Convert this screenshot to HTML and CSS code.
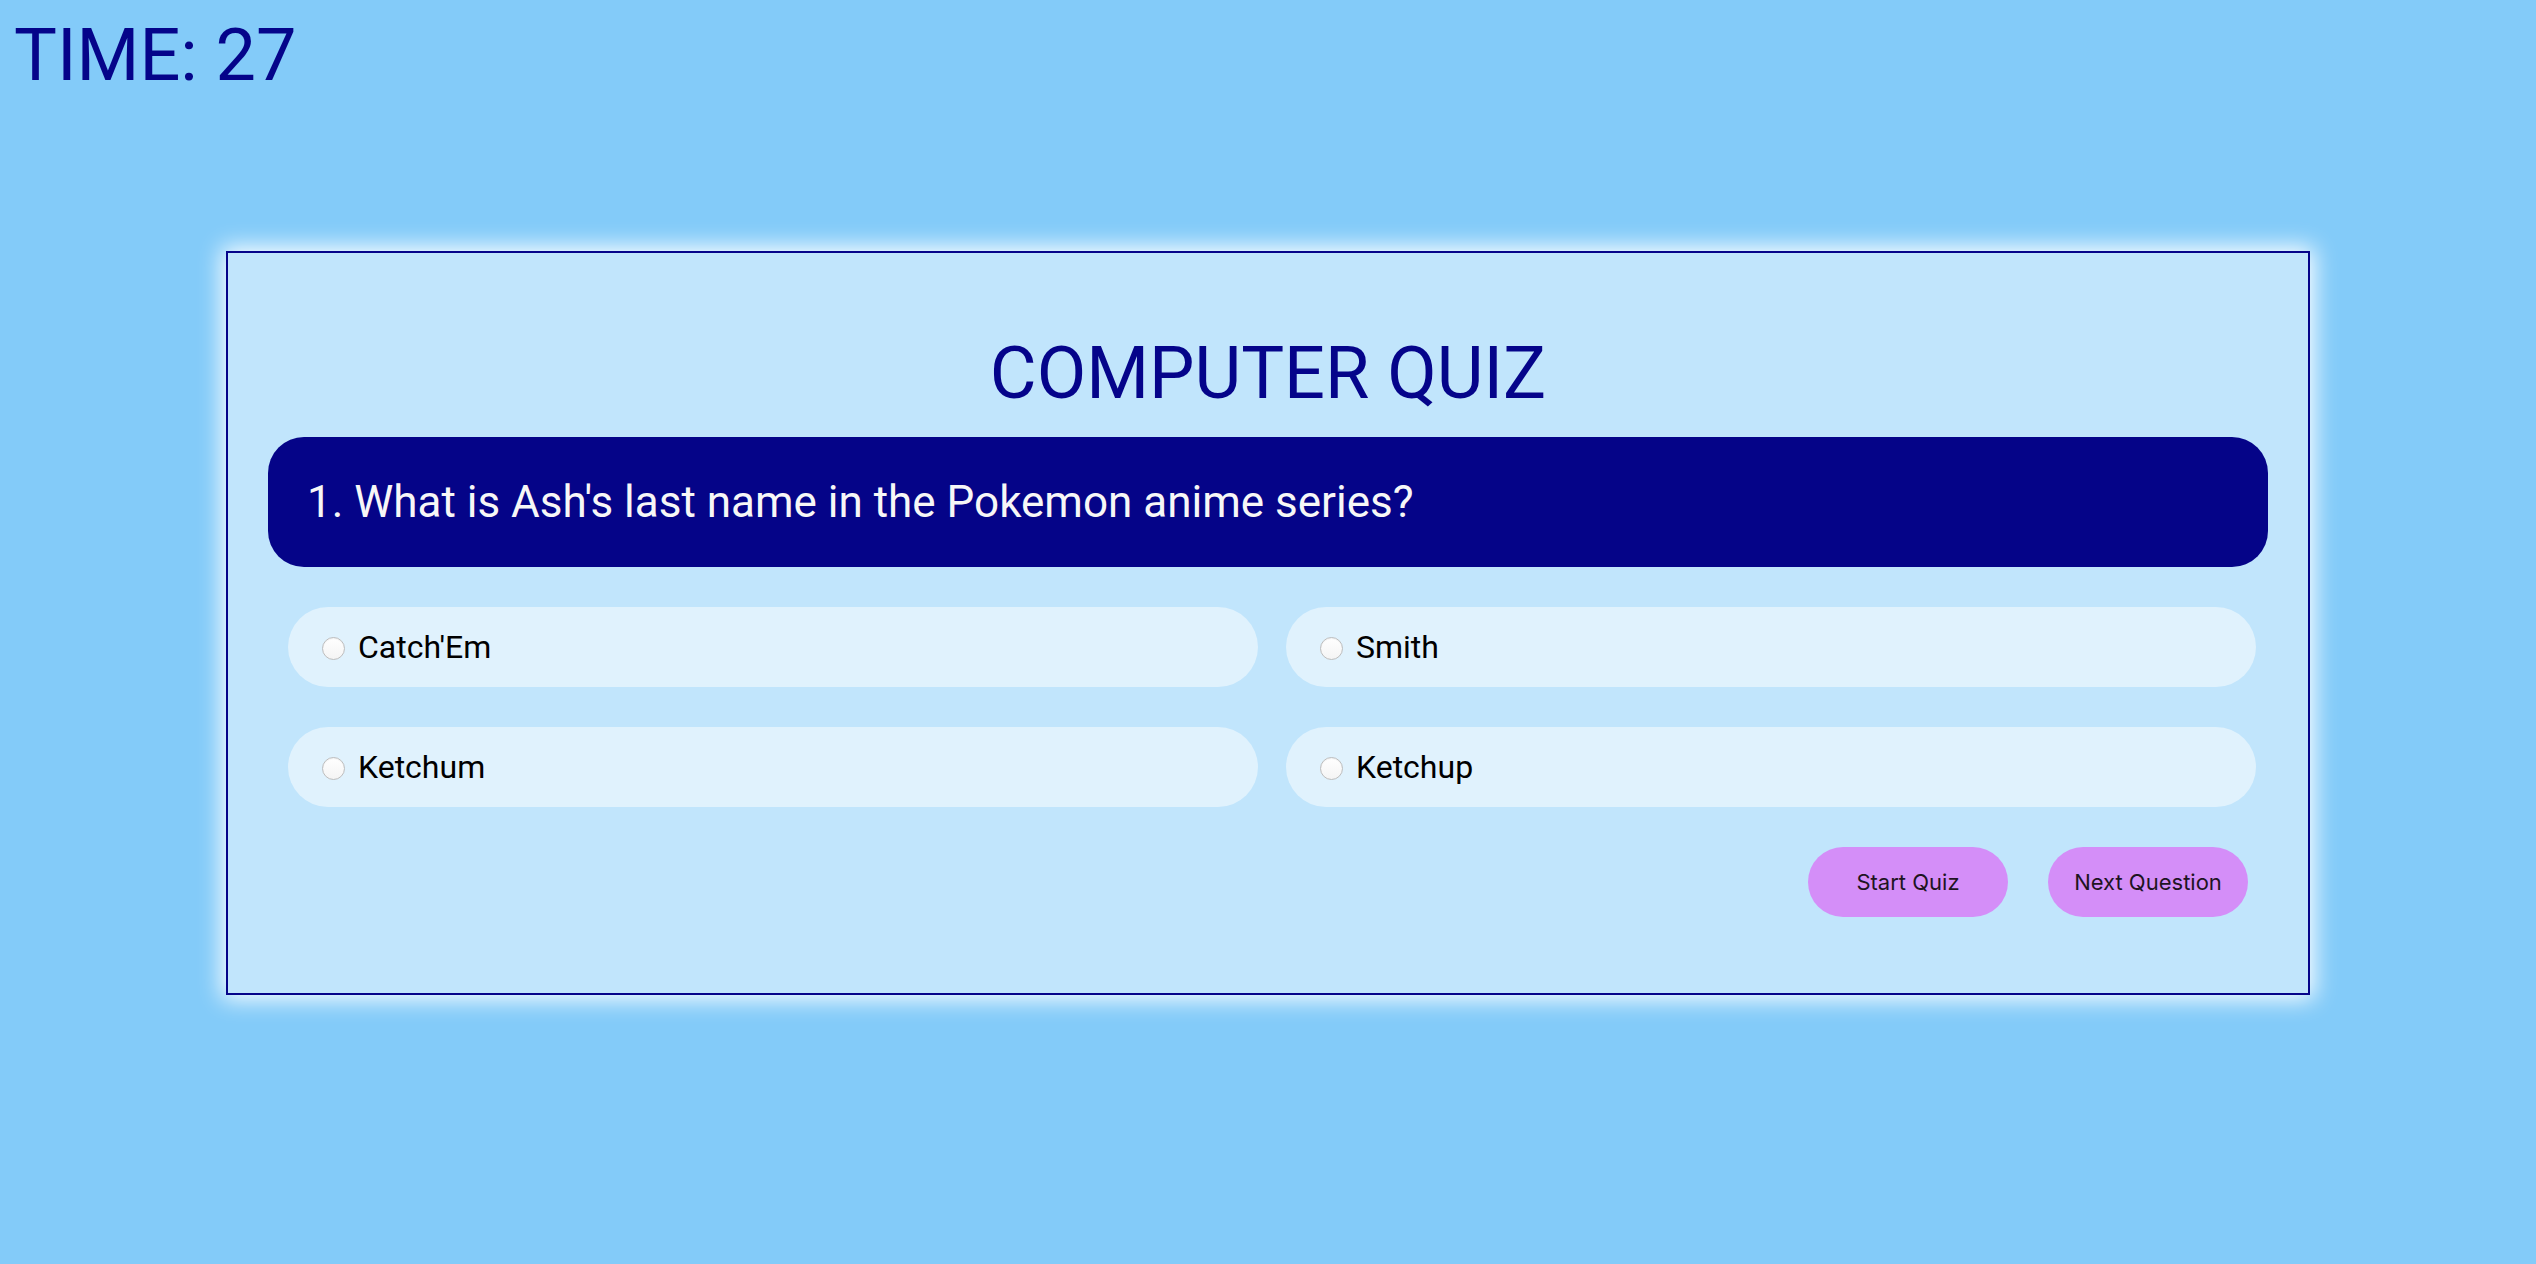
FILE: index.html
```html
<!DOCTYPE html>
<html lang="en">
<head>
<meta charset="utf-8">
<title>Computer Quiz</title>
<link rel="stylesheet" href="styles.css">
</head>
<body>
  <div class="timer">TIME: 27</div>
  <main class="card">
    <h1 class="title">COMPUTER QUIZ</h1>
    <div class="question">1. What is Ash's last name in the Pokemon anime series?</div>
    <div class="answers">
      <label class="answer"><input type="radio" name="a" class="radio"><span>Catch'Em</span></label>
      <label class="answer"><input type="radio" name="a" class="radio"><span>Smith</span></label>
      <label class="answer"><input type="radio" name="a" class="radio"><span>Ketchum</span></label>
      <label class="answer"><input type="radio" name="a" class="radio"><span>Ketchup</span></label>
    </div>
    <div class="actions">
      <button class="btn">Start Quiz</button>
      <button class="btn">Next Question</button>
    </div>
  </main>
</body>
</html>
```

FILE: styles.css
```css
html, body {
  margin: 0;
  padding: 0;
}
body {
  background: #83cbf9;
  font-family: Roboto, "Liberation Sans", sans-serif;
  min-height: 1264px;
  overflow: hidden;
}
.timer {
  color: #05048a;
  font-size: 72px;
  line-height: normal;
  padding: 13px 0 0 14px;
}
.card {
  box-sizing: border-box;
  width: 2084px;
  margin: 153px auto 0;
  background: #c1e5fc;
  border: 2px solid #05048a;
  box-shadow: 0 0 22px 4px #ffffff;
  padding: 78px 40px 76px;
}
.title {
  margin: 0;
  color: #05048a;
  font-size: 72px;
  font-weight: 400;
  line-height: normal;
  text-align: center;
}
.question {
  margin-top: 21px;
  height: 130px;
  box-sizing: border-box;
  background: #050488;
  border-radius: 36px;
  color: #f7f7f7;
  font-size: 44px;
  display: flex;
  align-items: center;
  padding-left: 39px;
}
.answers {
  display: grid;
  grid-template-columns: 1fr 1fr;
  column-gap: 28px;
  row-gap: 40px;
  margin: 40px 12px 0 20px;
}
.answer {
  height: 80px;
  border-radius: 40px;
  background: #e0f2fd;
  display: flex;
  align-items: center;
  padding-left: 34px;
  font-size: 32px;
  color: #000;
}
.radio {
  appearance: none;
  -webkit-appearance: none;
  margin: 2px 13px 0 0;
  width: 23px;
  height: 23px;
  border-radius: 50%;
  border: 1px solid #bdbdbd;
  background: linear-gradient(#ffffff, #f4f4f4);
  box-sizing: border-box;
  box-shadow: inset 0 1px 1px rgba(0,0,0,0.05);
}
.actions {
  display: flex;
  justify-content: flex-end;
  gap: 40px;
  margin: 40px 20px 0 0;
}
.btn {
  width: 200px;
  height: 70px;
  border: none;
  border-radius: 35px;
  background: #d48ef8;
  color: #1e1422;
  font-family: Inter, "Noto Sans", sans-serif;
  font-size: 22px;
  padding: 0;
}
```
